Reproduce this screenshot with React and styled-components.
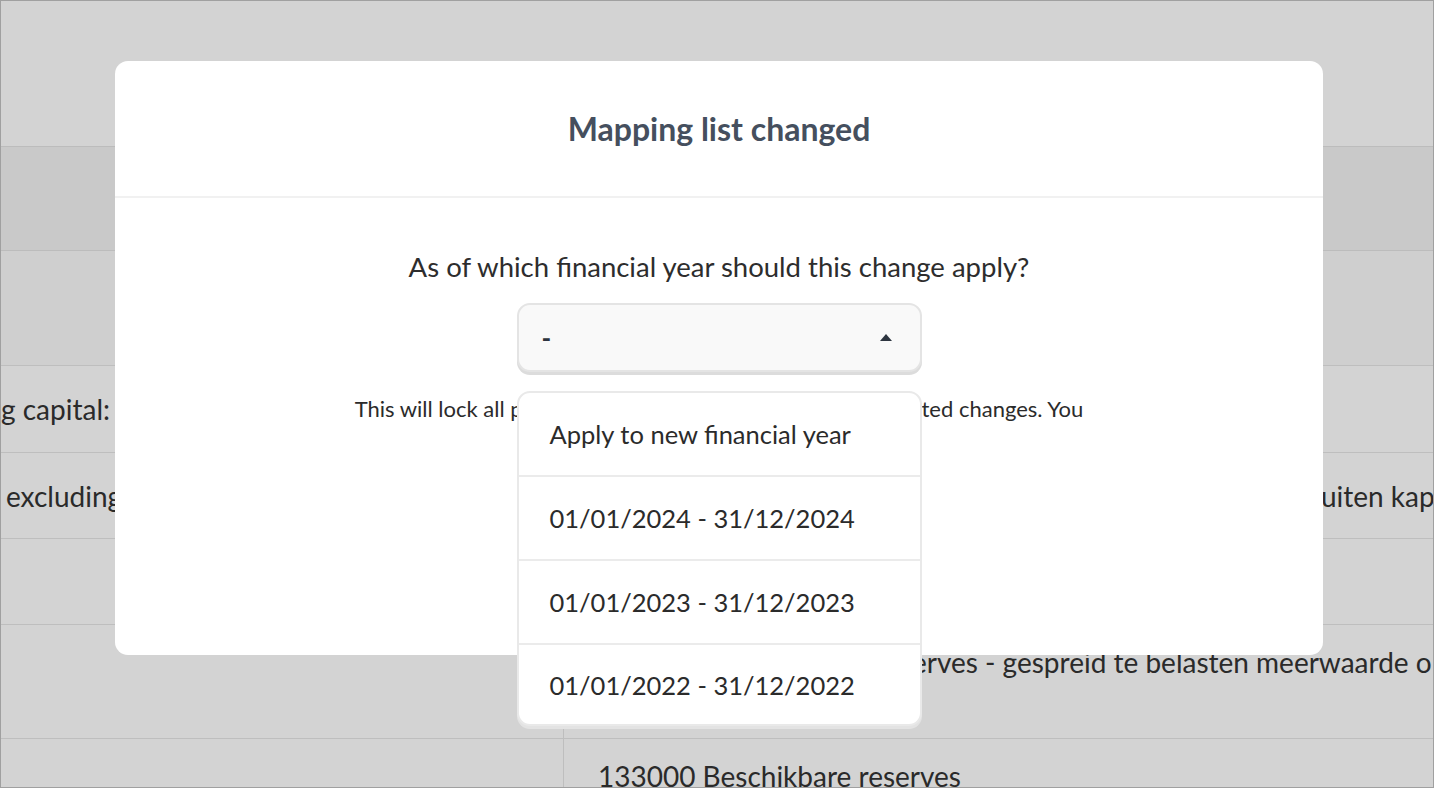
import React from 'react'
import styled, { createGlobalStyle } from 'styled-components'

const GlobalStyle = createGlobalStyle`
  html, body {
    margin: 0;
    padding: 0;
  }
  body {
    font-family: Lato, 'Open Sans', sans-serif;
    color: #333;
  }
`

const Frame = styled.div`
  position: relative;
  height: 100vh;
  box-sizing: border-box;
  border: 1px solid #a0a0a0;
  background: #fff;
  overflow: hidden;
`

// background page (table behind the dialog)
const TopBar = styled.div`
  height: 145px;
`

const HeaderRow = styled.div`
  height: 103px;
  background: #f3f3f3;
  border-top: 1px solid #e4e4e4;
  border-bottom: 1px solid #e4e4e4;
`

const Row = styled.div`
  display: grid;
  grid-template-columns: 562px 1fr;
  height: ${(p) => p.$h}px;
  background: ${(p) => (p.$tint ? '#fafafb' : '#fff')};
  border-bottom: 1px solid #e6e6e6;
  box-sizing: border-box;
`

const Cell = styled.div`
  display: flex;
  align-items: ${(p) => (p.$top ? 'flex-start' : 'center')};
  padding: ${(p) => (p.$top ? '20px' : '0')} 0 0 ${(p) => p.$pl || 0}px;
  font-size: 28px;
  color: #333;
  white-space: nowrap;
  overflow: hidden;
  border-left: ${(p) => (p.$divider ? '1px solid #e6e6e6' : 'none')};
`

// dialog
const Overlay = styled.div`
  position: absolute;
  inset: 0;
  background: rgba(0, 0, 0, 0.173);
  display: flex;
  justify-content: center;
  align-items: flex-start;
  padding-top: 60px;
`

const Modal = styled.div`
  width: 1208px;
  height: 594px;
  margin-left: 4px;
  background: #fff;
  border-radius: 13px;
  display: flex;
  flex-direction: column;
`

const ModalHeader = styled.div`
  height: 137px;
  box-sizing: border-box;
  border-bottom: 2px solid #f1f1f1;
  display: flex;
  align-items: center;
  justify-content: center;
`

const Title = styled.h2`
  margin: 0;
  font-size: 32px;
  font-weight: 700;
  color: #454f5e;
`

const ModalBody = styled.div`
  display: flex;
  flex-direction: column;
  align-items: center;
  padding-top: 52px;
`

const Question = styled.p`
  margin: 0;
  font-size: 27.5px;
  line-height: 34px;
  color: #2d2d2d;
`

const SelectWrap = styled.div`
  position: relative;
  width: 405px;
  margin-top: 19px;
`

const SelectBox = styled.div`
  height: 69px;
  box-sizing: border-box;
  border: 2px solid #e4e4e4;
  border-radius: 13px;
  background: #f9f9f9;
  box-shadow: 0 3px 0 #dcdcdc;
  display: flex;
  align-items: center;
  justify-content: space-between;
  padding: 0 27px 0 23px;
  font-size: 26px;
  font-weight: 700;
  color: #2d3540;
`

const Menu = styled.ul`
  position: absolute;
  top: 88px;
  left: 0;
  right: 0;
  margin: 0;
  padding: 0;
  list-style: none;
  background: #fff;
  border: 2px solid #e9e9e9;
  border-radius: 13px;
  box-shadow: 0 3px 0 #e3e3e3;
  overflow: hidden;
  z-index: 2;
`

const MenuItem = styled.li`
  height: 82px;
  display: flex;
  align-items: center;
  padding-left: 31px;
  font-size: 25.5px;
  color: #2b2b2b;
  & + & {
    border-top: 2px solid #ebebeb;
  }
  &:last-child {
    height: 79px;
  }
`

const Note = styled.p`
  margin: 24px 0 0;
  font-size: 22px;
  line-height: 26px;
  text-align: center;
  color: #2b2b2b;
`

const Caret = () => (
  <svg width="14" height="9" viewBox="0 0 14 9">
    <polygon points="7,1 13,8 1,8" fill="#2d3540" />
  </svg>
)

const options = [
  'Apply to new financial year',
  '01/01/2024 - 31/12/2024',
  '01/01/2023 - 31/12/2023',
  '01/01/2022 - 31/12/2022',
]

const App = () => {
  return (
    <>
      <GlobalStyle />
      <Frame>
        <TopBar />
        <HeaderRow />
        <Row $h={115} $tint>
          <Cell />
          <Cell $divider />
        </Row>
        <Row $h={87}>
          <Cell>g capital:</Cell>
          <Cell $divider $pl={34}>Werkkapitaal</Cell>
        </Row>
        <Row $h={86}>
          <Cell $pl={5}>excluding capital</Cell>
          <Cell $divider $pl={34}>
            Eigen vermogen: die reserves en overgedragen resultaten buiten kapitaal
          </Cell>
        </Row>
        <Row $h={86}>
          <Cell />
          <Cell $divider />
        </Row>
        <Row $h={114}>
          <Cell $top />
          <Cell $top $divider $pl={34}>
            132000 Belastingvrije reserves - gespreid te belasten meerwaarde op materiële vaste activa
          </Cell>
        </Row>
        <Row $h={60}>
          <Cell $top />
          <Cell $top $divider $pl={34}>
            133000 Beschikbare reserves
          </Cell>
        </Row>

        <Overlay>
          <Modal>
            <ModalHeader>
              <Title>Mapping list changed</Title>
            </ModalHeader>
            <ModalBody>
              <Question>As of which financial year should this change apply?</Question>
              <SelectWrap>
                <SelectBox>
                  <span>-</span>
                  <Caret />
                </SelectBox>
                <Menu>
                  {options.map((o) => (
                    <MenuItem key={o}>{o}</MenuItem>
                  ))}
                </Menu>
              </SelectWrap>
              <Note>
                This will lock all previous financial periods with all the selected changes. You
                <br />
                can still change this later.
              </Note>
            </ModalBody>
          </Modal>
        </Overlay>
      </Frame>
    </>
  )
}

export default App
